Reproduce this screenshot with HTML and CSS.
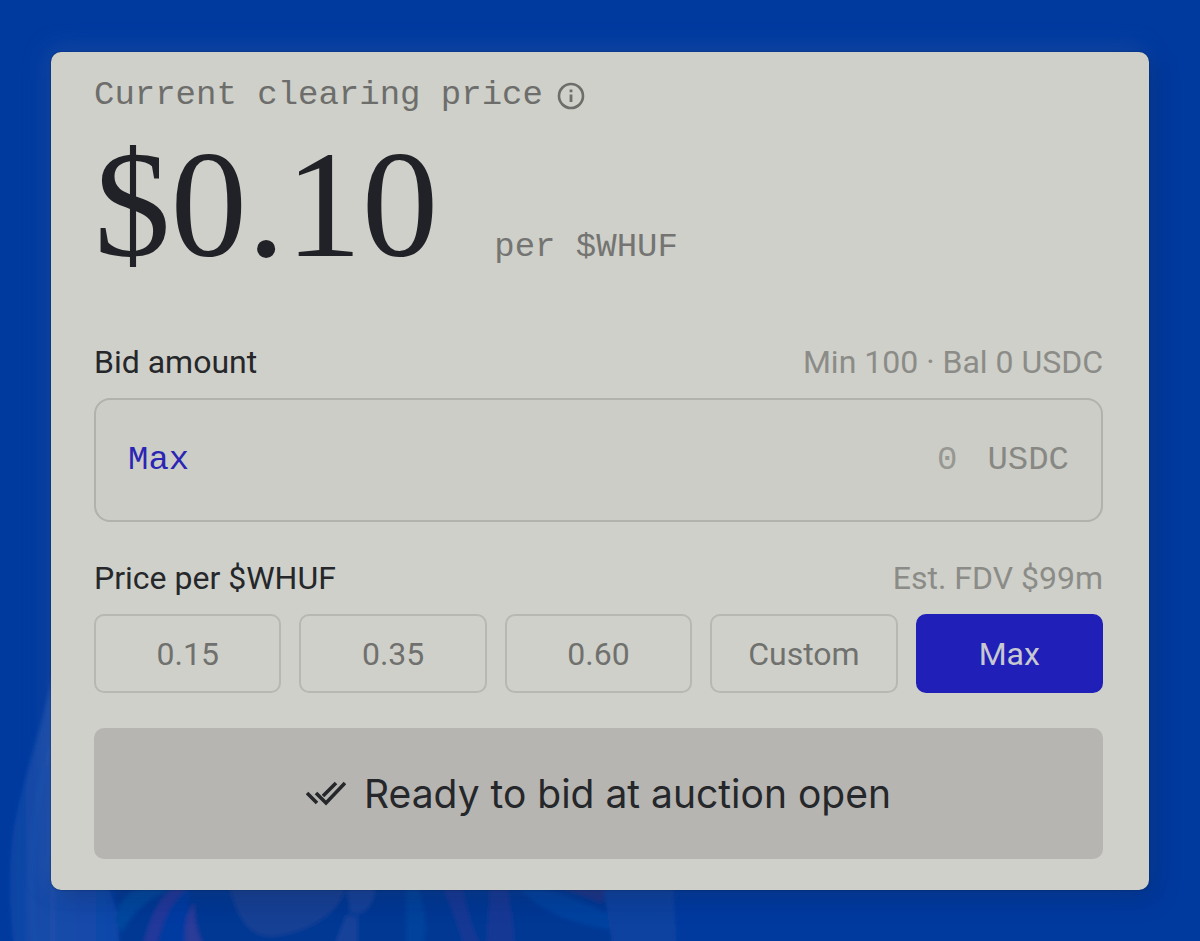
FILE: index.html
```html
<!DOCTYPE html>
<html lang="en">
<head>
<meta charset="utf-8">
<meta name="viewport" content="width=device-width, initial-scale=1">
<title>WHUF auction bid</title>
<link rel="stylesheet" href="styles.css">
</head>
<body>
<svg class="backdrop" viewBox="0 0 700 300" aria-hidden="true">
  <defs>
    <linearGradient id="hair" x1="0" y1="0" x2="1" y2="0">
      <stop offset="0" stop-color="#0c44a4"/>
      <stop offset="0.35" stop-color="#1a4dab"/>
      <stop offset="1" stop-color="#0b45a8"/>
    </linearGradient>
    <filter id="soft"><feGaussianBlur stdDeviation="2"/></filter>
  </defs>
  <g filter="url(#soft)">
    <path d="M56 20C42 90 18 150 12 200C8 240 10 275 14 310H130L100 220L56 180Z" fill="url(#hair)"/>
    <path d="M56 90C30 160 28 240 36 310" fill="none" stroke="#1d51ae" stroke-width="3"/>
    <path d="M115 240H670V310H120Z" fill="#003894"/>
    <path d="M116 280C116 262 128 248 150 245H176C150 256 132 270 122 292Z" fill="#05479e"/>
    <path d="M142 310C150 275 158 258 176 245H190C170 262 162 280 156 310Z" fill="#20389a"/>
    <path d="M158 310C162 280 172 258 190 246C188 270 186 290 190 310Z" fill="#063ba2"/>
    <path d="M186 310C184 290 186 272 194 262C194 284 200 300 208 310Z" fill="#2a3a98"/>
    <path d="M228 240H346C346 262 325 285 284 294C252 302 236 280 228 240Z" fill="#123f94"/>
    <path d="M346 240H376C376 264 365 276 350 272ZM346 274L358 276V310H332Z" fill="#16429a"/>
    <path d="M406 310V245H418C426 270 428 290 422 310Z" fill="#00439c"/>
    <path d="M442 245H462C468 270 472 290 484 310H466C458 284 450 264 442 245Z" fill="#173795"/>
    <path d="M490 245H508C510 270 516 290 514 310H486Z" fill="#173795"/>
    <path d="M515 242C550 248 590 262 618 278V290C580 284 540 274 515 242Z" fill="#0042a0"/>
    <path d="M550 242H608L602 262Z" fill="#1c3688"/>
    <path d="M603 240H673L677 310H613Z" fill="#0e43a0"/>
  </g>
</svg>
<main class="card">
  <header class="summary">
    <div class="caption">
      <span>Current clearing price</span>
      <svg class="info" viewBox="0 0 28 28" role="img" aria-label="Info">
        <circle cx="14" cy="14" r="12" fill="none" stroke="currentColor" stroke-width="2.6"/>
        <path d="M14 12.4V20M14 7.6V10.2" fill="none" stroke="currentColor" stroke-width="2.8"/>
      </svg>
    </div>
    <div class="price"><strong class="amount">$0.10</strong><span class="unit">per $WHUF</span></div>
  </header>
  <form class="bid">
    <div class="row"><label for="bid">Bid amount</label><span class="hint">Min 100 · Bal 0 USDC</span></div>
    <div class="field">
      <button type="button" class="max">Max</button>
      <input id="bid" class="value" type="text" inputmode="decimal" placeholder="0">
      <span class="currency">USDC</span>
    </div>
    <div class="row"><span id="price-label">Price per $WHUF</span><span class="hint">Est. FDV $99m</span></div>
    <div class="options" role="group" aria-labelledby="price-label">
      <button type="button" class="option">0.15</button>
      <button type="button" class="option">0.35</button>
      <button type="button" class="option">0.60</button>
      <button type="button" class="option">Custom</button>
      <button type="button" class="option selected" aria-pressed="true">Max</button>
    </div>
    <button type="submit" class="submit">
      <svg class="checks" viewBox="0 0 40 26" aria-hidden="true">
        <path d="M1 12L11 22M10 12L20 22L39 2M17 15L30 2" fill="none" stroke="currentColor" stroke-width="3.6"/>
      </svg>
      <span>Ready to bid at auction open</span>
    </button>
  </form>
</main>
</body>
</html>
```
FILE: styles.css
```css
* { box-sizing: border-box; }

body {
  position: relative;
  min-height: 100vh;
  margin: 0;
  padding: 52px 51px 51px;
  overflow-x: hidden;
  background: #003a9f;
  color: #25272a;
  font: 32px/44px Roboto, sans-serif;
}

button, input {
  margin: 0;
  padding: 0;
  border: 0;
  background: none;
  color: inherit;
  font: inherit;
}

.backdrop {
  position: absolute;
  left: 0;
  bottom: 0;
  width: 700px;
  height: 300px;
}

.card {
  position: relative;
  padding: 21px 46px 31px 43px;
  border-radius: 10px;
  background: #cfd0c9;
  box-shadow: 0 0 2px rgba(0, 20, 60, .6), 6px 8px 24px rgba(0, 20, 60, .25), -4px -4px 24px rgba(90, 130, 200, .25);
}

.caption {
  display: flex;
  align-items: center;
  gap: 14px;
  color: #6d6e6b;
  font: 34px/44px "Liberation Mono", monospace;
}

.info { width: 28px; height: 28px; margin-top: 2px; }

.price {
  display: flex;
  align-items: baseline;
  gap: 56px;
  margin-bottom: 47px;
}

.amount {
  color: #212227;
  font: 400 153px/176px "Liberation Serif", serif;
}

.unit {
  color: #747572;
  font: 34px/44px "Liberation Mono", monospace;
}

.row {
  display: flex;
  justify-content: space-between;
  margin-bottom: 14px;
}

.hint { color: #8b8c88; }

.field {
  display: flex;
  align-items: center;
  gap: 30px;
  height: 124px;
  margin-bottom: 34px;
  padding: 0 32px;
  border: 2px solid #b2b2ad;
  border-radius: 16px;
  background: #cccdc6;
  font: 34px/44px "Liberation Mono", monospace;
}

.max { color: #2b25b5; }

.value {
  flex: 1;
  min-width: 0;
  text-align: right;
}

.value::placeholder { color: #979893; opacity: 1; }

.currency { color: #878884; }

.options {
  display: grid;
  grid-template-columns: repeat(5, 1fr);
  gap: 18px;
  margin-bottom: 35px;
}

.option {
  height: 79px;
  border: 2px solid #b7b8b2;
  border-radius: 10px;
  color: #70716e;
}

.selected {
  border-color: #2020b8;
  background: #2020b8;
  color: #c8c8d0;
}

.submit {
  display: flex;
  align-items: center;
  justify-content: center;
  gap: 18px;
  width: 100%;
  height: 131px;
  border-radius: 10px;
  background: #b6b5b1;
  font: 39px/48px Inter, sans-serif;
}

.checks { width: 40px; height: 26px; }
```
